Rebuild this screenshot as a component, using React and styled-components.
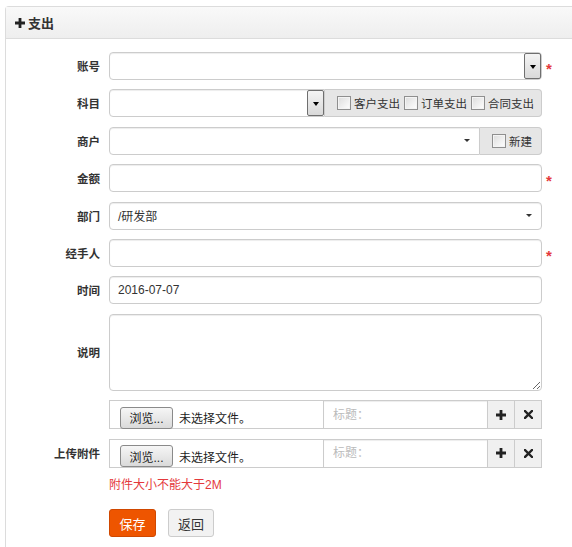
import React from "react";
import styled, { createGlobalStyle } from "styled-components";

const Global = createGlobalStyle`
  html, body { margin: 0; padding: 0; background: #fff; overflow: hidden; }
  body { font-family: "Liberation Sans", "Noto Sans CJK SC", sans-serif; font-size: 12px; color: #333; }
  * { box-sizing: border-box; }
`;

const Panel = styled.div`
  margin: 6px 0 0 5px;
  min-height: 560px;
  border: 1px solid #dcdcdc;
  border-right: none;
  border-radius: 4px 0 0 0;
`;

const Header = styled.div`
  height: 32px;
  display: flex;
  align-items: center;
  gap: 3px;
  padding-left: 9px;
  background: linear-gradient(#f9f9f9, #eeeeee);
  border-bottom: 1px solid #dcdcdc;
  font-weight: bold;
  font-size: 13px;
  color: #333;
`;

const Body = styled.div`
  padding-top: 13px;
  display: flex;
  flex-direction: column;
  gap: 9.4px;
`;

const Row = styled.div`
  display: flex;
  align-items: center;
  gap: 8px;
`;

const Label = styled.label`
  width: 95px;
  flex: none;
  text-align: right;
  padding-right: 1px;
  font-weight: bold;
  font-size: 11.5px;
  color: #333;
`;

const Field = styled.div`
  width: 433px;
  flex: none;
  display: flex;
`;

const Star = styled.span`
  color: #e4393c;
  font-size: 15px;
  font-weight: bold;
  margin: 5px 0 0 -4px;
  font-family: "Liberation Sans", sans-serif;
`;

const boxBase = `
  height: 28px;
  border: 1px solid #cccccc;
  background: #fff;
  box-shadow: inset 0 1px 1px rgba(0,0,0,0.075);
  font-size: 12px;
  color: #333;
`;

const TextInput = styled.input`
  ${boxBase}
  width: 100%;
  border-radius: 4px;
  padding: 0 8px;
  font-family: "Liberation Sans", "Noto Sans CJK SC", sans-serif;
  outline: none;
`;

const SelectBox = styled.div`
  ${boxBase}
  flex: ${(p) => (p.$w ? "none" : "1")};
  width: ${(p) => (p.$w ? p.$w + "px" : "auto")};
  border-radius: ${(p) => (p.$joined ? "4px 0 0 4px" : "4px")};
  display: flex;
  align-items: center;
  justify-content: space-between;
  padding: 0 ${(p) => (p.$old ? "0" : "9px")} 0 8px;
`;

const OldArrow = styled.span`
  width: 17px;
  height: 26px;
  border: 1px solid #6f6f6f;
  border-radius: 2px;
  background: linear-gradient(#f4f4f4, #d9d9d9);
  display: flex;
  align-items: center;
  justify-content: center;
  &::after {
    content: "";
    border-left: 3.5px solid transparent;
    border-right: 3.5px solid transparent;
    border-top: 4px solid #000;
    margin-top: 2px;
  }
`;

const Caret = styled.span`
  border-left: 3px solid transparent;
  border-right: 3px solid transparent;
  border-top: 3px solid #333;
`;

const Addon = styled.div`
  flex: ${(p) => (p.$w ? "none" : "1")};
  width: ${(p) => (p.$w ? p.$w + "px" : "auto")};
  height: 28px;
  display: flex;
  align-items: center;
  gap: 4px;
  padding-left: 12px;
  background: #e6e6e6;
  border: 1px solid #cccccc;
  border-left: none;
  border-radius: 0 4px 4px 0;
  font-size: 11.5px;
  color: #333;
  white-space: nowrap;
`;

const Check = styled.span`
  display: inline-flex;
  align-items: center;
  gap: 3px;
  flex: none;
  white-space: nowrap;
  &::before {
    content: "";
    flex: none;
    width: 12px;
    height: 12px;
    border: 1px solid #8f8f8f;
    background: linear-gradient(135deg, #dcdcdc, #ffffff);
    box-shadow: inset 0 0 0 1px #f4f4f4;
  }
`;

const TextArea = styled.textarea`
  ${boxBase}
  width: 100%;
  height: 77px;
  border-radius: 4px;
  resize: both;
  outline: none;
`;

const Upload = styled.div`
  width: 433px;
  flex: none;
  height: 29px;
  display: flex;
  border: 1px solid #cccccc;
  background: #fff;
`;

const FilePart = styled.div`
  width: 213px;
  flex: none;
  display: flex;
  align-items: center;
  gap: 6px;
  padding: 6px 0 0 10px;
  font-size: 12px;
  color: #222;
  white-space: nowrap;
`;

const Browse = styled.span`
  width: 53px;
  flex: none;
  height: 22px;
  border: 1px solid #8a8a8a;
  border-radius: 3px;
  background: linear-gradient(#f6f6f6, #dadada);
  display: flex;
  align-items: center;
  justify-content: center;
  font-size: 12px;
  color: #222;
`;

const TitleInput = styled.input`
  flex: 1;
  min-width: 0;
  border: none;
  border-left: 1px solid #cccccc;
  box-shadow: inset 0 1px 1px rgba(0,0,0,0.075);
  padding: 0 9px;
  font-size: 12px;
  outline: none;
  font-family: "Liberation Sans", "Noto Sans CJK SC", sans-serif;
  &::placeholder { color: #bbbbbb; }
`;

const IconBtn = styled.span`
  width: 27px;
  flex: none;
  display: flex;
  align-items: center;
  justify-content: center;
  background: #f0f0f0;
  border-left: 1px solid #cccccc;
`;

const Note = styled.div`
  margin-left: 103px;
  line-height: 16px;
  font-size: 12px;
  color: #e4393c;
`;

const Actions = styled.div`
  margin: 7px 0 0 103px;
  display: flex;
  gap: 12px;
`;

const Btn = styled.button`
  height: 28px;
  width: ${(p) => (p.$primary ? "47px" : "46px")};
  border: 1px solid ${(p) => (p.$primary ? "#d04800" : "#cccccc")};
  border-radius: 3px;
  background: ${(p) => (p.$primary ? "#ee5500" : "#f2f2f2")};
  color: ${(p) => (p.$primary ? "#fff" : "#333")};
  font-size: 13px;
  font-family: "Liberation Sans", "Noto Sans CJK SC", sans-serif;
  padding: 0;
`;

const PlusIcon = ({ size = 10 }) => (
  <svg width={size} height={size} viewBox="0 0 10 10">
    <path d="M3.6 0h2.8v3.6H10v2.8H6.4V10H3.6V6.4H0V3.6h3.6z" fill="#222" />
  </svg>
);

const XIcon = () => (
  <svg width="9" height="9" viewBox="0 0 9 9">
    <path d="M1 1L8 8M8 1L1 8" stroke="#222" strokeWidth="2.4" strokeLinecap="square" />
  </svg>
);

const UploadRow = ({ label }) => (
  <Row>
    <Label>{label}</Label>
    <Upload>
      <FilePart>
        <Browse>浏览...</Browse>
        <span>未选择文件。</span>
      </FilePart>
      <TitleInput placeholder="标题：" />
      <IconBtn><PlusIcon /></IconBtn>
      <IconBtn><XIcon /></IconBtn>
    </Upload>
  </Row>
);

export default function App() {
  return (
    <>
      <Global />
      <Panel>
        <Header>
          <PlusIcon />
          <span>支出</span>
        </Header>
        <Body>
          <Row>
            <Label>账号</Label>
            <Field>
              <SelectBox $old><span /><OldArrow /></SelectBox>
            </Field>
            <Star>*</Star>
          </Row>
          <Row>
            <Label>科目</Label>
            <Field>
              <SelectBox $old $joined $w={216}><span /><OldArrow /></SelectBox>
              <Addon>
                <Check>客户支出</Check>
                <Check>订单支出</Check>
                <Check>合同支出</Check>
              </Addon>
            </Field>
          </Row>
          <Row>
            <Label>商户</Label>
            <Field>
              <SelectBox $joined><span /><Caret /></SelectBox>
              <Addon $w={62}>
                <Check>新建</Check>
              </Addon>
            </Field>
          </Row>
          <Row>
            <Label>金额</Label>
            <Field><TextInput /></Field>
            <Star>*</Star>
          </Row>
          <Row>
            <Label>部门</Label>
            <Field>
              <SelectBox><span>/研发部</span><Caret /></SelectBox>
            </Field>
          </Row>
          <Row>
            <Label>经手人</Label>
            <Field><TextInput /></Field>
            <Star>*</Star>
          </Row>
          <Row>
            <Label>时间</Label>
            <Field><TextInput defaultValue="2016-07-07" /></Field>
          </Row>
          <Row>
            <Label>说明</Label>
            <Field><TextArea /></Field>
          </Row>
          <UploadRow label="" />
          <UploadRow label="上传附件" />
          <Note>附件大小不能大于2M</Note>
          <Actions>
            <Btn $primary>保存</Btn>
            <Btn>返回</Btn>
          </Actions>
        </Body>
      </Panel>
    </>
  );
}
